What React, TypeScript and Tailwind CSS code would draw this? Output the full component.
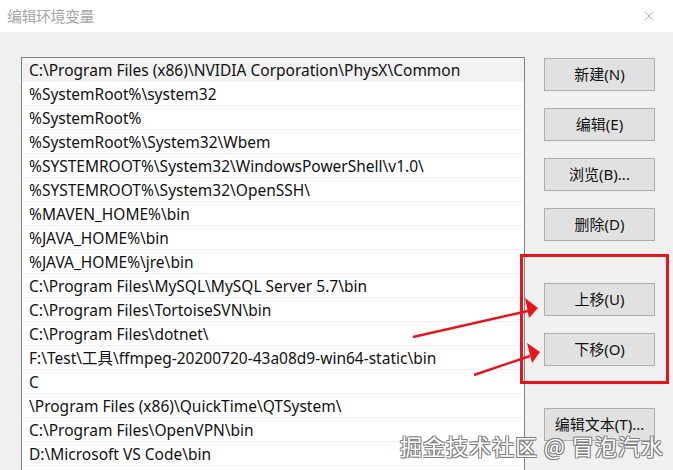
import { X } from "lucide-react";

const paths = [
  "C:\\Program Files (x86)\\NVIDIA Corporation\\PhysX\\Common",
  "%SystemRoot%\\system32",
  "%SystemRoot%",
  "%SystemRoot%\\System32\\Wbem",
  "%SYSTEMROOT%\\System32\\WindowsPowerShell\\v1.0\\",
  "%SYSTEMROOT%\\System32\\OpenSSH\\",
  "%MAVEN_HOME%\\bin",
  "%JAVA_HOME%\\bin",
  "%JAVA_HOME%\\jre\\bin",
  "C:\\Program Files\\MySQL\\MySQL Server 5.7\\bin",
  "C:\\Program Files\\TortoiseSVN\\bin",
  "C:\\Program Files\\dotnet\\",
  "F:\\Test\\工具\\ffmpeg-20200720-43a08d9-win64-static\\bin",
  "C",
  "\\Program Files (x86)\\QuickTime\\QTSystem\\",
  "C:\\Program Files\\OpenVPN\\bin",
  "D:\\Microsoft VS Code\\bin",
  "",
];

const font = { fontFamily: '"Noto Sans", "Noto Sans CJK SC", sans-serif' };

const Btn = ({ label, className = "" }: { label: string; className?: string }) => (
  <button
    className={`w-[111px] h-[33px] bg-[#e1e1e1] border border-[#adadad] text-[15px] text-[#111] flex items-center justify-center ${className}`}
  >
    {label}
  </button>
);

const App = () => {
  return (
    <div
      className="relative w-[673px] h-[470px] overflow-hidden bg-[#f0f0f0]"
      style={font}
    >
      <div className="h-[32px] bg-white flex items-center justify-between pl-[7px] pr-[13px]">
        <span className="text-[15px] text-[#a6a6a6] tracking-[-0.5px]">编辑环境变量</span>
        <X size={16} strokeWidth={1} className="text-[#8a8a8a] -translate-x-[3px]" />
      </div>

      <div className="flex pl-[21px] pt-[25px] gap-[19px]">
        <div className="w-[504px] border border-[#828282] border-b-0 bg-white">
          {paths.map((p, i) => (
            <div
              key={i}
              className={`h-[24px] pl-[7px] pt-[2px] flex items-center border-b border-[#f0f0f0] text-[15.5px] text-[#111] whitespace-nowrap ${
                i === 0 ? "bg-[#f2f2f2]" : ""
              }`}
            >
              {p}
            </div>
          ))}
        </div>

        <div className="flex flex-col pt-[1px]">
          <Btn label="新建(N)" />
          <Btn label="编辑(E)" className="mt-[17px]" />
          <Btn label="浏览(B)..." className="mt-[17px]" />
          <Btn label="删除(D)" className="mt-[17px]" />
          <Btn label="上移(U)" className="mt-[42px]" />
          <Btn label="下移(O)" className="mt-[17px]" />
          <Btn label="编辑文本(T)..." className="mt-[42px]" />
        </div>
      </div>

      <div className="absolute left-[520px] top-[254px] w-[149px] h-[130px] border-[3px] border-[#e8141b]" />

      <svg className="absolute left-0 top-0" width="673" height="470">
        <line x1="413" y1="337" x2="528" y2="311" stroke="#e8141b" strokeWidth="2.5" />
        <polygon points="538,308 525,298 529,318" fill="#e8141b" />
        <line x1="474" y1="375" x2="530" y2="356" stroke="#e8141b" strokeWidth="2.5" />
        <polygon points="540,352 527,343 532,363" fill="#e8141b" />
      </svg>

      <div
        className="absolute left-[400px] top-[429px] text-[22px] text-white tracking-[1px]"
        style={{
          fontFamily: '"Noto Sans CJK SC", sans-serif',
          textShadow:
            "1px 1px 0 #808080, -1px -1px 0 #808080, 1px -1px 0 #808080, -1px 1px 0 #808080",
        }}
      >
        掘金技术社区 @ 冒泡汽水
      </div>
    </div>
  );
};

export default App;
